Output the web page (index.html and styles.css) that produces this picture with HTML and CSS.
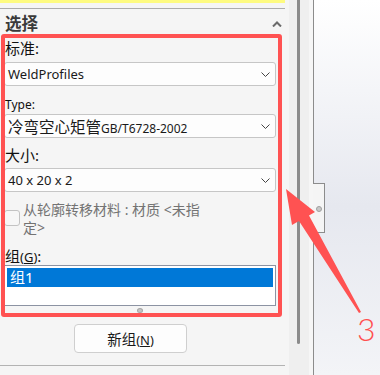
FILE: index.html
```html
<!DOCTYPE html>
<html lang="zh">
<head>
<meta charset="utf-8">
<link rel="stylesheet" href="styles.css">
</head>
<body>
<div class="app">
  <div class="panel">
    <div class="yellow"></div>
    <div class="rule top"></div>
    <div class="head">
      <span class="title">选择</span>
      <svg class="caret" width="10" height="6" viewBox="0 0 10 6"><path d="M1 5.5 L5 1.5 L9 5.5" fill="none" stroke="#6b6b6b" stroke-width="2"/></svg>
    </div>
    <div class="body">
      <div class="label l1">标准:</div>
      <div class="select"><span class="val">WeldProfiles</span><svg class="chev" width="9" height="5" viewBox="0 0 9 5"><path d="M0.5 0.5 L4.5 4.5 L8.5 0.5" fill="none" stroke="#444" stroke-width="1"/></svg></div>
      <div class="label l2">Type:</div>
      <div class="select"><span class="val"><span class="big">冷弯空心矩管</span><span class="small">GB/T6728-2002</span></span><svg class="chev" width="9" height="5" viewBox="0 0 9 5"><path d="M0.5 0.5 L4.5 4.5 L8.5 0.5" fill="none" stroke="#444" stroke-width="1"/></svg></div>
      <div class="label l3">大小:</div>
      <div class="select"><span class="val">40 x 20 x 2</span><svg class="chev" width="9" height="5" viewBox="0 0 9 5"><path d="M0.5 0.5 L4.5 4.5 L8.5 0.5" fill="none" stroke="#444" stroke-width="1"/></svg></div>
      <div class="check"><span class="box"></span><span class="ctext">从轮廓转移材料 : 材质 &lt;未指<br>定&gt;</span></div>
      <div class="label l4">组<span class="mn">(<u>G</u>)</span>:</div>
      <div class="list"><div class="row sel">组1</div></div>
      <div class="grip"></div>
    </div>
    <div class="btnrow"><button class="btn">新组<span class="mn">(<u>N</u>)</span></button></div>
    <div class="rule bottom"></div>
  </div>
  <div class="track"><div class="thumb"></div></div>
  <div class="viewport"><div class="tab"><span class="dot"></span></div></div>
  <div class="redbox"></div>
  <svg class="arrow" width="380" height="375" viewBox="0 0 380 375"><polygon points="286,189 315,212 309,215.5 361,312 359,313 299,221 292,225" fill="#ff5252"/></svg>
  <div class="num">3</div>
</div>
</body>
</html>
```

FILE: styles.css
```css
* { box-sizing: border-box; }
html, body { margin: 0; padding: 0; }
body {
  width: 380px;
  height: 375px;
  overflow: hidden;
  background: #f5f5f5;
  font-family: "Noto Sans", "Noto Sans CJK SC", sans-serif;
  color: #1a1a1a;
}
.app { position: relative; display: flex; width: 380px; height: 375px; }
.panel { width: 289px; flex: none; background: #f5f5f5; }
.yellow { width: 285px; height: 3px; background: #fefb80; }
.rule { width: 285px; height: 1px; background: #acacac; }
.rule.top { margin-top: 5px; }
.rule.bottom { margin-top: 12px; background: #b3b3b3; }
.head {
  height: 29px;
  display: flex;
  justify-content: space-between;
  align-items: flex-start;
  padding: 0 7px 0 5px;
}
.title { font-weight: 700; font-size: 16.5px; line-height: 18px; padding-top: 6px; color: #3a3a3a; }
.caret { margin-top: 12px; }
.body { padding-left: 4px; }
.label { padding-left: 1px; font-size: 15px; color: #111; }
.l1 { height: 20px; line-height: 20px; margin-bottom: 4px; }
.l2 { margin-top: 10px; line-height: 18px; height: 18px; font-size: 12px; }
.l3 { margin-top: 7px; margin-bottom: 3px; line-height: 20px; height: 20px; }
.l4 { margin-top: 10px; line-height: 18px; height: 18px; }
.mn { font-size: 13px; }
.select {
  width: 272px;
  height: 24px;
  background: #fdfdfd;
  border: 1px solid #c6c6c6;
  border-radius: 3px;
  display: flex;
  align-items: center;
  justify-content: space-between;
  padding: 0 5px 0 3px;
  font-size: 13px;
  color: #1a1a1a;
}
.val { white-space: nowrap; }
.big { font-size: 15.5px; }
.small { font-size: 12px; }
.check { display: flex; margin-top: 9px; }
.box {
  width: 16px; height: 16px; flex: none; margin-top: 9px;
  border: 1px solid #c3c3c3; border-radius: 3px; background: #f7f7f7;
}
.ctext { margin-left: 3px; font-size: 14px; line-height: 18px; color: #737373; }
.list {
  width: 272px; height: 41px;
  border: 1px solid #8c93a3;
  background: #fff;
  padding: 2px;
}
.row.sel {
  height: 19px; line-height: 19px; padding-left: 3px;
  background: #0078d7; color: #fff; font-size: 15px;
}
.grip {
  width: 6px; height: 5px; margin: 2px 0 0 133px;
  border-radius: 50%; background: #c4c4c4; border: 1px solid #a5a5a5;
}
.btnrow { margin-top: 11px; padding-left: 74px; }
.btn {
  display: block; width: 113px; height: 29px; padding: 0;
  border: 1px solid #cfcfcf; border-radius: 4px; background: #fdfdfd;
  font-family: inherit; font-size: 14.5px; color: #1a1a1a;
}
.track {
  width: 24px; flex: none; padding-left: 8px;
  background: linear-gradient(to right, #efefef 20px, #f6f6f6 20px);
}
.thumb { width: 3px; height: 344px; background: #8b8b8b; border-radius: 0 0 2px 2px; }
.viewport {
  flex: 1; position: relative;
  border-left: 1px solid #8c8c8c;
  background: linear-gradient(#ffffff 0%, #e6e8ef 55%, #f3f4f7 100%);
}
.tab {
  position: absolute; left: -1px; top: 183px; width: 12px; height: 50px;
  border: 1px solid #8c8c8c; border-left: none; background: #f5f5f5;
}
.dot {
  position: absolute; left: 3px; top: 22px; width: 6px; height: 6px;
  border-radius: 50%; background: #c8c8c8; border: 1px solid #a0a0a0;
}
.redbox {
  position: absolute; left: 1px; top: 34px; width: 281px; height: 283px;
  border: 4px solid #ff5252; border-radius: 3px;
}
.arrow { position: absolute; left: 0; top: 0; pointer-events: none; }
.num {
  position: absolute; left: 357px; top: 313px;
  font-family: "Lato", "Liberation Sans", sans-serif; font-weight: 300;
  font-size: 32px; line-height: 32px;
  color: #ff4f4f;
}
```
